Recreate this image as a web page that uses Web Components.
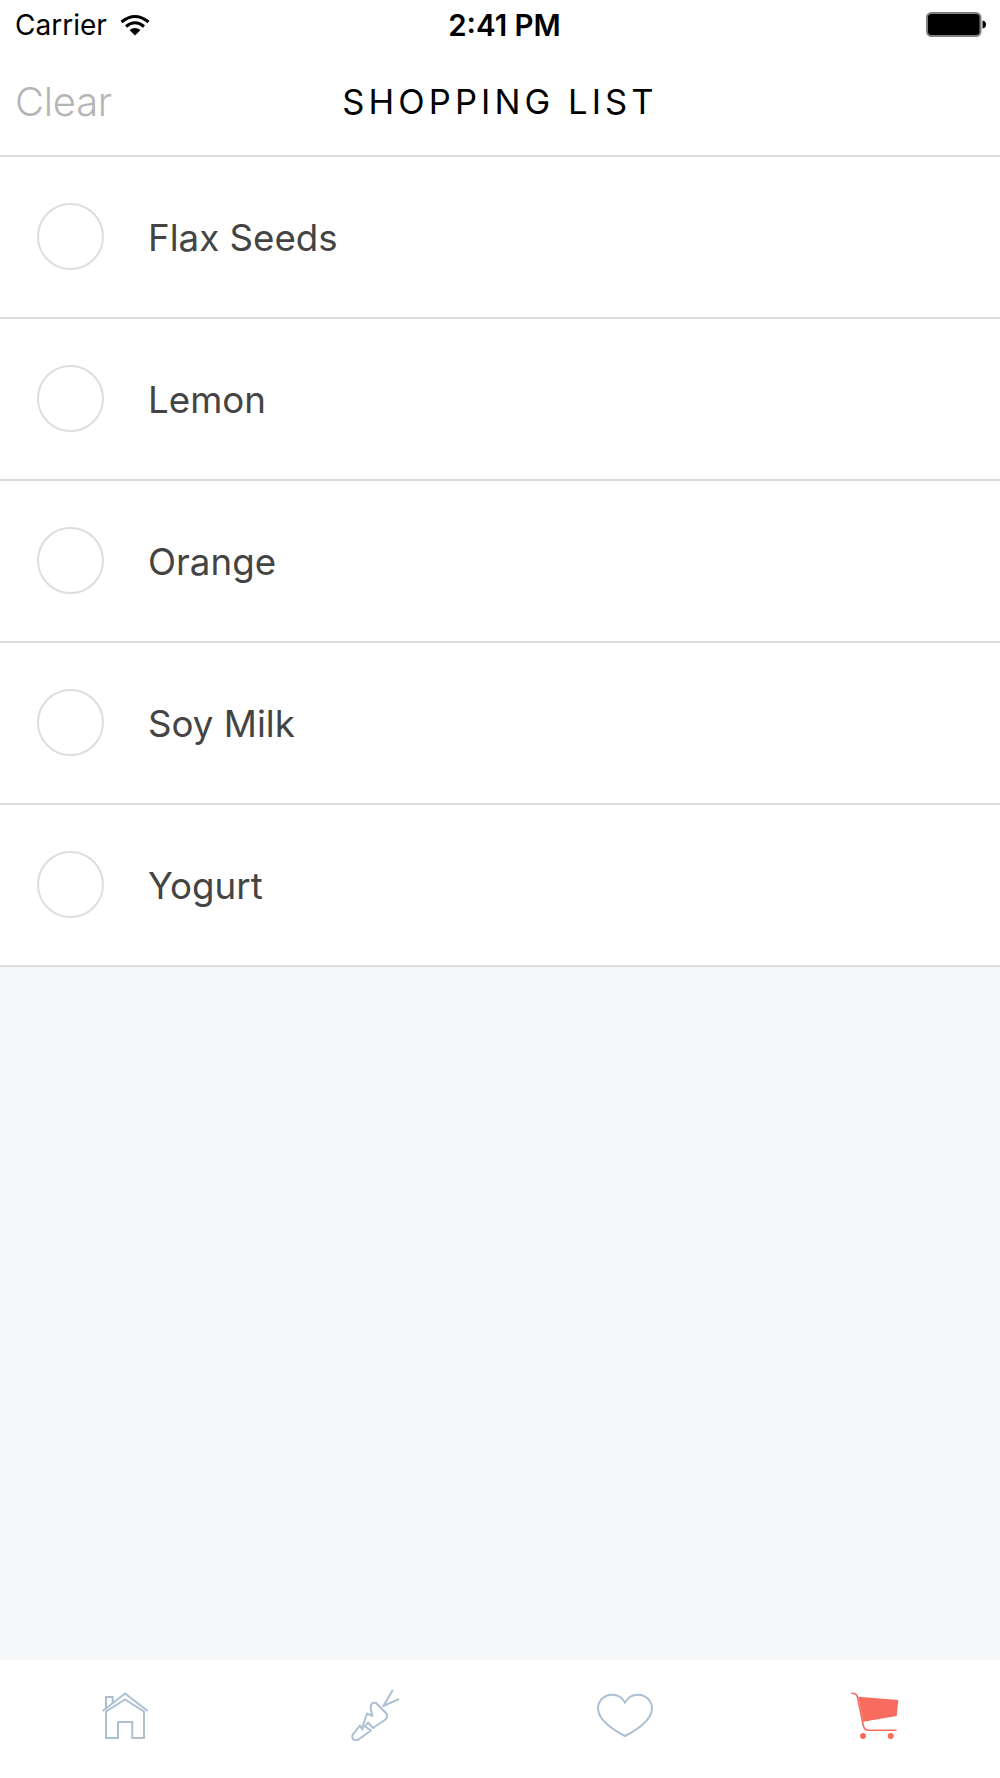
<!DOCTYPE html>
<html>
<head>
<meta charset="utf-8">
<title>Shopping List</title>
<style>
    html, body { margin: 0; padding: 0; background: #f6f7f9; }
    body { font-family: Inter, "Liberation Sans", sans-serif; }
    #app { display: flex; flex-direction: column; width: 1000px; height: 1778px; }
</style>
</head>
<body>
<div id="app">
    <status-bar carrier="Carrier" time="2:41 PM"></status-bar>
    <nav-header action="Clear">SHOPPING LIST</nav-header>
    <shopping-list>
        <shopping-item>Flax Seeds</shopping-item>
        <shopping-item>Lemon</shopping-item>
        <shopping-item>Orange</shopping-item>
        <shopping-item>Soy Milk</shopping-item>
        <shopping-item>Yogurt</shopping-item>
    </shopping-list>
    <tab-bar>
        <tab-icon name="home"></tab-icon>
        <tab-icon name="carrot"></tab-icon>
        <tab-icon name="heart"></tab-icon>
        <tab-icon name="cart"></tab-icon>
    </tab-bar>
</div>

<script>
class StatusBar extends HTMLElement {
    constructor() {
        super();
        this.attachShadow({ mode: 'open' });
    }

    connectedCallback() {
        this.shadowRoot.innerHTML = `
            <style>
                :host {
                    display: grid;
                    grid-template-columns: 1fr auto 1fr;
                    align-items: center;
                    height: 50px;
                    padding: 0 13px 0 15px;
                    background: white;
                    color: #000;
                    font-size: 28px;
                }
                .left { display: flex; align-items: center; gap: 13px; }
                .time { font-weight: 600; font-size: 29.5px; margin-left: 7px; }
                .right { display: flex; justify-content: flex-end; }
                svg { display: block; }
            </style>
            <div class="left">
                <span>${this.getAttribute('carrier')}</span>
                <svg width="30" height="22" viewBox="0 0 30 22">
                    <path d="M1.5 8 Q15 -3 28.5 8" fill="none" stroke="#000" stroke-width="3"/>
                    <path d="M6 12.5 Q15 5 24 12.5" fill="none" stroke="#000" stroke-width="3"/>
                    <path d="M9.5 16 Q15 12 20.5 16 L15 21.5 Z" fill="#000"/>
                </svg>
            </div>
            <div class="time">${this.getAttribute('time')}</div>
            <div class="right">
                <svg width="61" height="26" viewBox="0 0 61 26">
                    <rect x="1" y="1" width="53.5" height="23" rx="4.5" fill="#000" stroke="#808080" stroke-width="2"/>
                    <path d="M56.5 8.5 Q60 9 60 12.5 Q60 16 56.5 16.5 Z" fill="#000"/>
                </svg>
            </div>
        `;
    }
}

class NavHeader extends HTMLElement {
    constructor() {
        super();
        this.attachShadow({ mode: 'open' });
    }

    connectedCallback() {
        this.shadowRoot.innerHTML = `
            <style>
                :host {
                    display: grid;
                    grid-template-columns: 1fr auto 1fr;
                    align-items: center;
                    height: 102.5px;
                    padding: 0 15px 2px;
                    background: white;
                    border-bottom: 2px solid #dcdcdc;
                }
                .action { color: #b5b5b5; font-size: 40px; font-weight: 300; letter-spacing: -0.3px; }
                .title { color: #000; font-size: 34.5px; font-weight: 400; letter-spacing: 4.1px; }
            </style>
            <div class="action">${this.getAttribute('action')}</div>
            <div class="title"><slot></slot></div>
            <div></div>
        `;
    }
}

class ShoppingList extends HTMLElement {
    constructor() {
        super();
        this.attachShadow({ mode: 'open' });
    }

    connectedCallback() {
        this.shadowRoot.innerHTML = `
            <style>
                :host { display: flex; flex-direction: column; flex: 1; background: #f6f7f9; }
            </style>
            <slot></slot>
        `;
    }
}

class ShoppingItem extends HTMLElement {
    constructor() {
        super();
        this.attachShadow({ mode: 'open' });
    }

    connectedCallback() {
        this.shadowRoot.innerHTML = `
            <style>
                :host {
                    display: flex;
                    align-items: center;
                    gap: 44.5px;
                    height: 160px;
                    padding-left: 36.5px;
                    background: white;
                    border-bottom: 2px solid #dcdcdc;
                    color: #444;
                    font-size: 36.7px;
                }
                .check {
                    width: 67px;
                    height: 67px;
                    box-sizing: border-box;
                    border: 2px solid #dedede;
                    border-radius: 50%;
                }
                .label { margin-top: 2px; }
            </style>
            <div class="check"></div>
            <div class="label"><slot></slot></div>
        `;
    }
}

class TabBar extends HTMLElement {
    constructor() {
        super();
        this.attachShadow({ mode: 'open' });
    }

    connectedCallback() {
        this.shadowRoot.innerHTML = `
            <style>
                :host {
                    display: grid;
                    grid-template-columns: repeat(4, 1fr);
                    height: 108px;
                    padding-top: 10px;
                    background: white;
                }
            </style>
            <slot></slot>
        `;
    }
}

// shapes are drawn in a 100x80 box
const TAB_ICONS = {
    home: `<g fill="none" stroke="#aebfd2" stroke-width="2">
            <path d="M22.7 41 L45 23.5 L67.7 41"/>
            <path d="M26 68 V41.5 L45 29.5 L64 41.5 V68 H52.3 V52 H38 V68 Z"/>
            <path d="M26 39 V27 H32.7 V33"/>
        </g>`,
    carrot: `<g fill="none" stroke="#aebfd2" stroke-width="2" stroke-linejoin="round" stroke-linecap="round">
            <path d="M53.3 36 L62.3 20.7 M53.3 36 L68.3 29.3"/>
            <path d="M24 63 L30 55.5 L32.5 59.5 L33.5 54 L37 43.5 L42.5 46 L40.5 38 Q41 31.5 46 33 L56.5 43.5 Q58 47 55.5 49.5 L43 58 L38 52.5 L35 56.5 L41 60.5 L28.5 69.5 Q24 71.5 22.5 68 Q21.5 66 24 63 Z"/>
        </g>`,
    heart: `<path fill="none" stroke="#aebfd2" stroke-width="2" d="M45 32.5 C42 27 37 24.7 32 24.7 C24 24.7 18 31 18 38.5 C18 50 34 60.5 45 66 C56 60.5 72 50 72 38.5 C72 31 66 24.7 58 24.7 C53 24.7 48 27 45 32.5 Z"/>`,
    cart: `<g fill="#f76c5e">
            <path d="M28.3 26.7 L68.3 30 L66.7 46 L33.3 51.7 Z"/>
            <circle cx="33" cy="66" r="3"/>
            <circle cx="60.7" cy="66" r="3"/>
            <path fill="none" stroke="#f76c5e" stroke-width="1.6" stroke-linecap="round" d="M22 23.3 Q26.5 23.3 27.3 26.5 L33 54 Q34 60.3 38 60.3 H66"/>
        </g>`
};

class TabIcon extends HTMLElement {
    constructor() {
        super();
        this.attachShadow({ mode: 'open' });
    }

    connectedCallback() {
        this.shadowRoot.innerHTML = `
            <style>
                :host { display: flex; justify-content: center; align-items: flex-start; }
                svg { display: block; }
            </style>
            <svg width="100" height="80" viewBox="-5 0 100 80">${TAB_ICONS[this.getAttribute('name')]}</svg>
        `;
    }
}

customElements.define('status-bar', StatusBar);
customElements.define('nav-header', NavHeader);
customElements.define('shopping-list', ShoppingList);
customElements.define('shopping-item', ShoppingItem);
customElements.define('tab-bar', TabBar);
customElements.define('tab-icon', TabIcon);
</script>
</body>
</html>
